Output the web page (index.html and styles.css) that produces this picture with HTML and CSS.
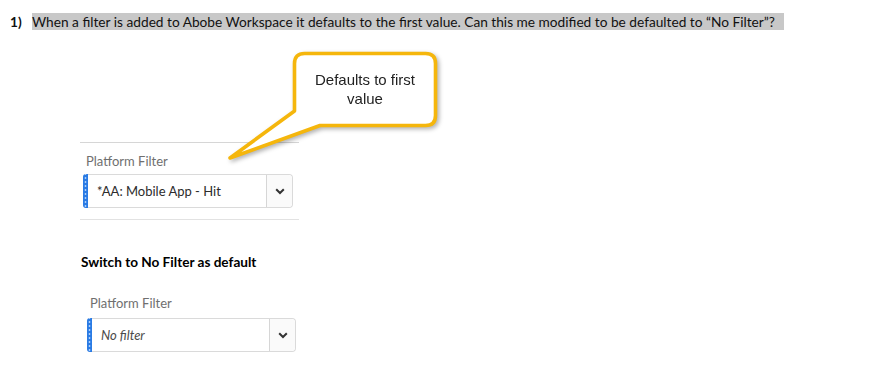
FILE: index.html
```html
<!DOCTYPE html>
<html lang="en">
<head>
    <meta charset="UTF-8">
    <title>Filter defaults</title>
    <link rel="stylesheet" href="styles.css">
</head>
<body>
    <p class="question"><span class="num">1)</span><span class="hl">When a filter is added to Abobe Workspace it defaults to the first value. Can this me modified to be defaulted to “No Filter”?</span></p>

    <div class="callout">
        <svg width="225" height="118" viewBox="0 0 225 118">
            <path d="M84.5,5.5 H205.5 Q215.5,5.5 215.5,15.5 V67.5 Q215.5,77.5 205.5,77.5 H100 L10,110 L74.5,63 V15.5 Q74.5,5.5 84.5,5.5 Z" fill="#fff" stroke="#f5b60c" stroke-width="3.6" stroke-linejoin="round"/>
        </svg>
        <div class="callout-text">Defaults to first<br>value</div>
    </div>

    <section class="panel panel-lined">
        <div class="panel-label">Platform Filter</div>
        <div class="picker">
            <span class="grip"></span>
            <span class="picker-value">*AA: Mobile App - Hit</span>
            <span class="picker-btn">
                <svg width="10" height="7" viewBox="0 0 10 7"><polyline points="1.2,1.2 5,5 8.8,1.2" fill="none" stroke="#333" stroke-width="2"/></svg>
            </span>
        </div>
    </section>

    <p class="subhead">Switch to No Filter as default</p>

    <section class="panel panel-second">
        <div class="panel-label">Platform Filter</div>
        <div class="picker">
            <span class="grip"></span>
            <span class="picker-value empty">No filter</span>
            <span class="picker-btn">
                <svg width="10" height="7" viewBox="0 0 10 7"><polyline points="1.2,1.2 5,5 8.8,1.2" fill="none" stroke="#333" stroke-width="2"/></svg>
            </span>
        </div>
    </section>
</body>
</html>
```

FILE: styles.css
```css
* {
    margin: 0;
    padding: 0;
    box-sizing: border-box;
}
body {
    font-family: Lato, "Open Sans", sans-serif;
    background-color: #ffffff;
    color: #000;
    padding-top: 13px;
    position: relative;
    width: 878px;
    height: 370px;
    overflow: hidden;
}
.question {
    display: flex;
    font-size: 13.7px;
    line-height: 17px;
    color: #111;
}
.num {
    font-weight: bold;
    width: 32px;
    padding-left: 10px;
}
.hl {
    background-color: #c8c8c8;
    padding-right: 9px;
}
.callout {
    position: absolute;
    left: 220px;
    top: 48px;
    width: 225px;
    height: 118px;
    filter: drop-shadow(2px 2px 2px rgba(0, 0, 0, 0.3));
}
.callout svg {
    display: block;
}
.callout-text {
    position: absolute;
    left: 73px;
    top: 22px;
    width: 144px;
    text-align: center;
    font-family: "Liberation Sans", Arial, sans-serif;
    font-size: 15px;
    line-height: 19px;
    color: #222;
}
.panel {
    width: 219px;
}
.panel-lined {
    margin: 112px 0 0 80px;
    border-top: 1px solid #d6d6d6;
    border-bottom: 1px solid #e2e2e2;
    padding: 10px 0 11px 3px;
}
.panel-label {
    font-size: 13px;
    line-height: 16px;
    color: #6f6f6f;
    padding-left: 3px;
    margin-bottom: 5px;
}
.picker {
    display: flex;
    align-items: stretch;
    width: 210px;
    height: 34px;
    border: 1px solid #dadada;
    border-left: none;
    border-radius: 4px;
    background: #fff;
}
.grip {
    width: 5px;
    border-radius: 3px 0 0 3px;
    background-color: #2a7be4;
    background-image: radial-gradient(circle at 2.5px 2px, #a9cdfa 0.8px, transparent 1.2px);
    background-size: 5px 4px;
    background-position: 0 6px;
    background-repeat: repeat-y;
    margin-top: -1px;
    margin-bottom: -1px;
}
.picker-value {
    flex: 1;
    padding-left: 9px;
    font-size: 13px;
    line-height: 32px;
    color: #2c2c2c;
}
.picker-value.empty {
    font-style: italic;
    color: #4b4b4b;
}
.picker-btn {
    width: 26px;
    border-left: 1px solid #d6d6d6;
    display: flex;
    align-items: center;
    justify-content: center;
    background: #fafafa;
    border-radius: 0 4px 4px 0;
}
.subhead {
    margin: 33px 0 0 81px;
    font-size: 13.6px;
    line-height: 18px;
    font-weight: bold;
}
.panel-second {
    margin: 24px 0 0 84px;
    padding-left: 3px;
}
.panel-second .panel-label {
    margin-bottom: 7px;
}
.panel-second .picker {
    width: 209px;
}
```
